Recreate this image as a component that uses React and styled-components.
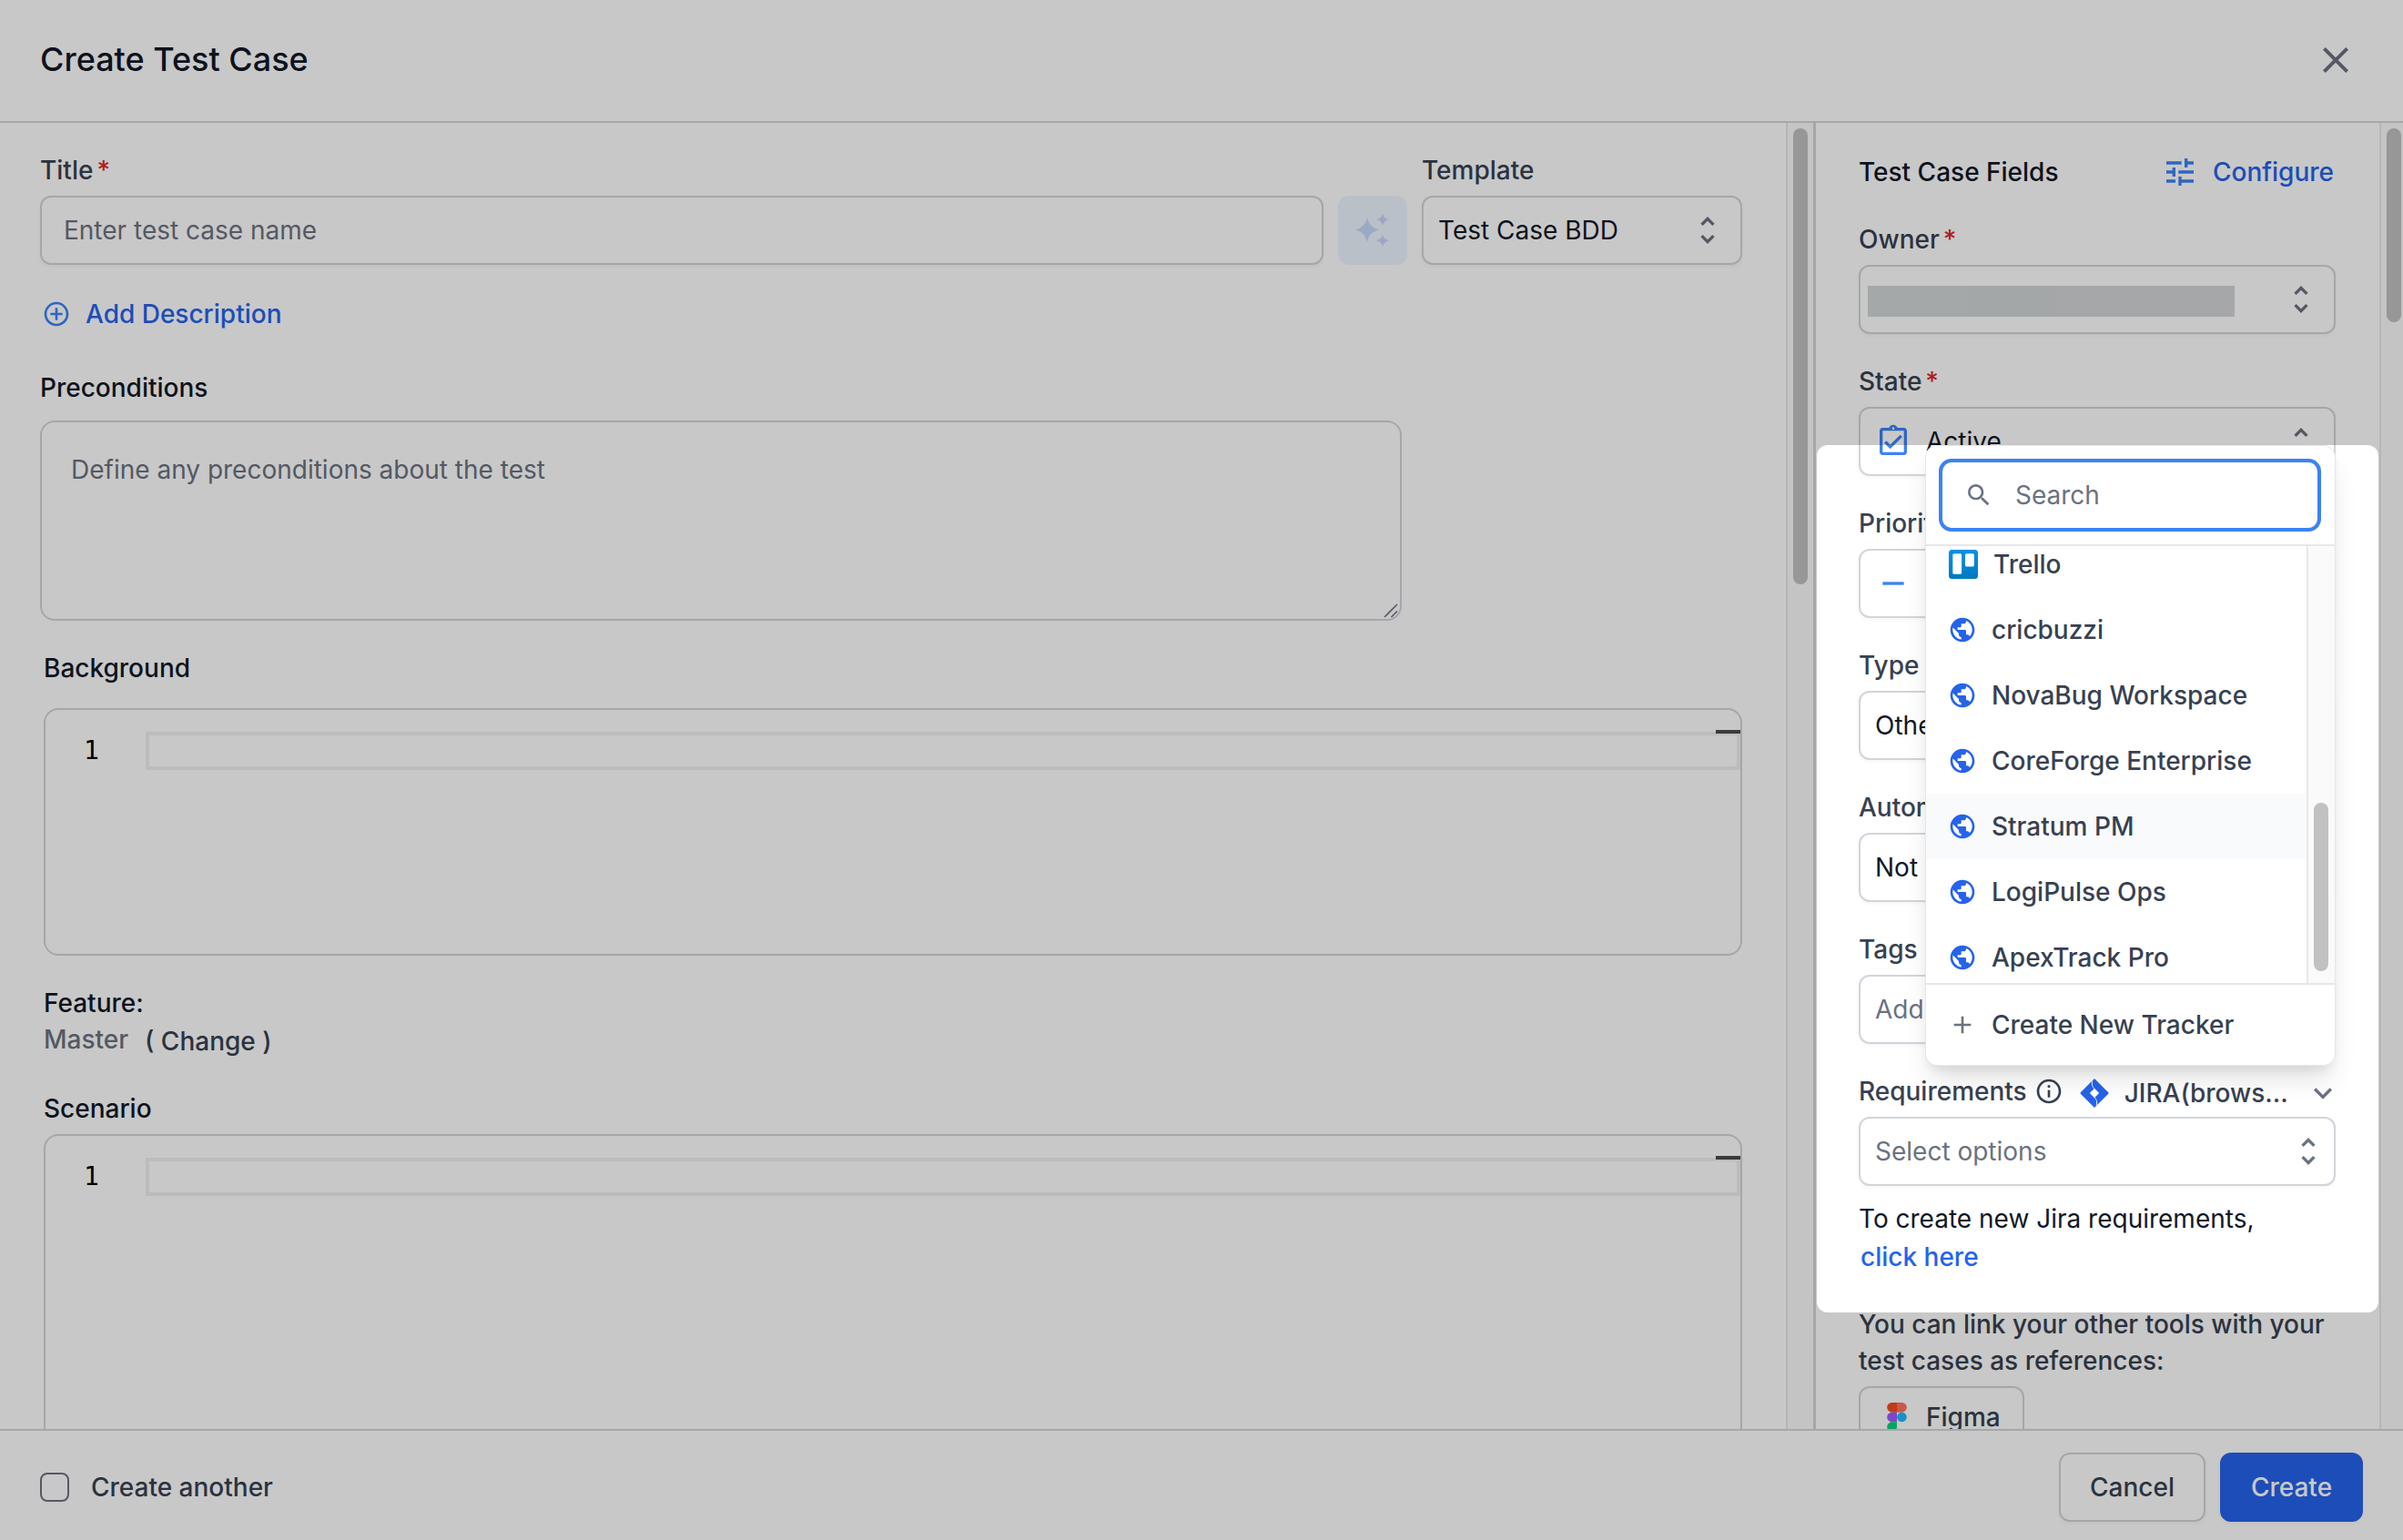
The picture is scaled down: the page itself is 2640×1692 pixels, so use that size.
import React from "react";
import styled, { createGlobalStyle } from "styled-components";
import {
  MdClose,
  MdTune,
  MdUnfoldMore,
  MdExpandMore,
  MdInfoOutline,
  MdPublic,
  MdAdd,
  MdSearch,
  MdRemove,
  MdOutlineAssignmentTurnedIn,
  MdAddCircleOutline,
} from "react-icons/md";

const c = {
  ink: "#111827",
  text: "#374151",
  muted: "#6b7280",
  line: "#d1d5db",
  soft: "#e5e7eb",
  blue: "#2563eb",
  sky: "#3b82f6",
  red: "#dc2626",
};

const Global = createGlobalStyle`
  * { box-sizing: border-box; }
  body { margin: 0; background: #fff; }
  svg { display: block; flex: none; }
`;

const Page = styled.div`
  position: relative;
  display: flex;
  flex-direction: column;
  width: 2640px;
  height: 1692px;
  overflow: hidden;
  background: #fff;
  color: ${c.text};
  font-family: Inter, "Liberation Sans", sans-serif;
  font-size: 28px;
  line-height: 40px;
  white-space: nowrap;
`;

const Header = styled.header`
  display: flex;
  align-items: center;
  justify-content: space-between;
  flex: none;
  height: 135px;
  padding: 0 50px 2px 44px;
  border-bottom: 2px solid ${c.line};
  color: ${c.muted};
`;

const Heading = styled.h1`
  margin: 0 0 1px;
  font-size: 36px;
  line-height: 48px;
  font-weight: 500;
  color: ${c.ink};
`;

const Body = styled.div`
  display: flex;
  flex: 1;
  min-height: 0;
`;

const Main = styled.main`
  display: flex;
  width: 1992px;
  overflow: hidden;
`;

const Form = styled.div`
  width: 1962px;
  padding: 32px 48px 0 44px;
`;

const Track = styled.div`
  flex: none;
  width: ${(p) => p.$width}px;
  padding: ${(p) => p.$offset}px 0 0 6px;
  background: #fafafa;
  border-left: 2px solid #e8e8e8;
`;

const Thumb = styled.div`
  width: 16px;
  height: ${(p) => p.$height}px;
  border-radius: 8px;
  background: #c1c1c1;
`;

const Label = styled.div`
  font-weight: 500;
  color: ${(p) => (p.$strong ? c.ink : c.text)};
`;

const Star = styled.span`
  margin-left: 4px;
  color: ${c.red};
`;

const Control = styled.div`
  display: flex;
  align-items: center;
  gap: 16px;
  height: 76px;
  margin-top: 8px;
  padding: 0 ${(p) => p.$right ?? 16}px 0 ${(p) => p.$left ?? 16}px;
  border: 2px solid ${c.line};
  border-radius: 12px;
  background: #fff;
  box-shadow: 0 2px 4px rgba(0, 0, 0, 0.04);
  color: ${(p) => (p.$placeholder ? c.muted : c.ink)};
`;

const Push = styled.span`
  margin-left: auto;
  color: ${c.muted};
`;

const TitleRow = styled.div`
  display: flex;
  align-items: flex-end;
  gap: 16px;
`;

const TitleField = styled.div`
  width: 1410px;
`;

const TemplateField = styled.div`
  width: 352px;
`;

const AiButton = styled.div`
  display: grid;
  place-items: center;
  width: 76px;
  height: 76px;
  border-radius: 12px;
  background: #edf5ff;
`;

const LinkButton = styled.div`
  display: flex;
  align-items: center;
  gap: ${(p) => p.$gap}px;
  font-weight: 500;
  color: ${c.blue};
  svg { color: ${c.sky}; }
`;

const AddDescription = styled(LinkButton)`
  margin: 34px 0 41px 2px;
`;

const TextArea = styled.div`
  position: relative;
  width: 1496px;
  height: 220px;
  margin-top: 16px;
  padding: 32px;
  border: 2px solid ${c.line};
  border-radius: 16px;
  color: ${c.muted};
`;

const Grip = styled.svg`
  position: absolute;
  right: 2px;
  bottom: 1px;
`;

const Steps = styled.div`
  margin-left: 4px;
  padding-top: 32px;
`;

const Editor = styled.div`
  position: relative;
  width: 1866px;
  height: ${(p) => p.$height}px;
  margin-top: ${(p) => p.$gap}px;
  padding-top: 24px;
  border: 2px solid ${c.line};
  border-radius: 16px;
`;

const CodeLine = styled.div`
  display: flex;
  height: 42px;
  line-height: 42px;
  font-family: "DejaVu Sans Mono", monospace;
  color: #000;
`;

const Gutter = styled.span`
  width: 110px;
  padding-left: 42px;
`;

const ActiveLine = styled.span`
  flex: 1;
  border: 4px solid #f0f0f0;
`;

const RulerMark = styled.span`
  position: absolute;
  top: 22px;
  right: 0;
  width: 27px;
  height: 4px;
  background: #4a4a4a;
`;

const Feature = styled.div`
  margin: 32px 0 34px;
`;

const FeatureValue = styled.div`
  display: flex;
  align-items: flex-start;
  height: 42px;
  font-weight: 500;
  color: ${c.muted};
`;

const Change = styled.span`
  margin: 2px 0 0 18px;
  color: ${c.text};
`;

const Sidebar = styled.aside`
  display: flex;
  flex: 1;
  min-width: 0;
  overflow: hidden;
  border-left: 3px solid ${c.line};
`;

const Fields = styled.div`
  width: 619px;
  flex: none;
  padding: 34px 48px 0 47px;
`;

const FieldsHead = styled.div`
  display: flex;
  justify-content: space-between;
  margin-bottom: 34px;
  padding-right: 2px;
  font-weight: 500;
  color: ${c.ink};
`;

const Field = styled.div`
  margin-bottom: ${(p) => p.$gap ?? 32}px;
`;

const Redacted = styled.span`
  width: 403px;
  height: 34px;
  margin: 4px 0 0 -8px;
  background: linear-gradient(90deg, #d3d6d8 0 27%, #d2d5d7 27% 51%, #d4d5d8 51%);
`;

const Blue = styled.span`
  color: ${c.sky};
`;

const ReqRow = styled.div`
  display: flex;
  align-items: center;
  height: 40px;
`;

const Tracker = styled.div`
  display: flex;
  align-items: center;
  flex: 1;
  margin: 4px -6px 0 18px;
  font-weight: 500;
`;

const TrackerName = styled.span`
  margin-left: 17px;
`;

const Caret = styled.span`
  margin-left: auto;
  color: ${c.muted};
`;

const Info = styled.span`
  margin-left: 8px;
`;

const Hint = styled.div`
  color: ${c.ink};
`;

const HintLink = styled.div`
  margin: 2px 0 34px 2px;
  font-weight: 500;
  color: ${c.blue};
`;

const ToolNote = styled.div`
  width: 540px;
  font-weight: 500;
  white-space: pre-line;
`;

const ToolButton = styled.div`
  display: flex;
  align-items: center;
  gap: 21px;
  width: 182px;
  height: 68px;
  margin-top: 8px;
  padding-left: 29px;
  border: 2px solid ${c.line};
  border-radius: 12px;
  font-weight: 500;
`;

const Footer = styled.footer`
  position: relative;
  display: flex;
  align-items: center;
  flex: none;
  height: 122px;
  padding: 4px 44px 0;
  border-top: 2px solid ${c.line};
  background: #fff;
  font-weight: 500;
`;

const Checkbox = styled.span`
  width: 32px;
  height: 32px;
  margin-right: 24px;
  border: 2px solid ${c.muted};
  border-radius: 8px;
`;

const Actions = styled.div`
  display: flex;
  gap: 16px;
  margin-left: auto;
`;

const Button = styled.div`
  display: grid;
  place-items: center;
  width: ${(p) => (p.$primary ? 157 : 161)}px;
  height: 76px;
  border: 2px solid ${(p) => (p.$primary ? c.blue : c.line)};
  border-radius: 12px;
  background: ${(p) => (p.$primary ? c.blue : "#fff")};
  color: ${(p) => (p.$primary ? "#fff" : c.text)};
  box-shadow: 0 2px 4px rgba(0, 0, 0, 0.04);
`;

const Menu = styled.div`
  position: absolute;
  left: 2115px;
  top: 489px;
  width: 451px;
  height: 682px;
  border: 1px solid #e6e7e9;
  border-radius: 13px;
  background: #fff;
  overflow: hidden;
  font-weight: 500;
  box-shadow: 0 20px 30px -6px rgba(0, 0, 0, 0.12), 0 8px 12px -4px rgba(0, 0, 0, 0.08);
`;

const SearchWrap = styled.div`
  padding: 14px 15px 14px 14px;
  border-bottom: 2px solid ${c.soft};
`;

const SearchBox = styled.div`
  display: flex;
  align-items: center;
  gap: 24px;
  height: 80px;
  padding-left: 24px;
  border: 4px solid ${c.sky};
  border-radius: 14px;
  font-weight: 400;
  color: ${c.muted};
`;

const MenuBody = styled.div`
  display: flex;
  height: 480px;
  overflow: hidden;
`;

const List = styled.div`
  width: 418px;
  margin-top: -16px;
`;

const Item = styled.div`
  display: flex;
  align-items: center;
  gap: ${(p) => (p.$inset ? 17 : 16)}px;
  height: 72px;
  padding-left: ${(p) => (p.$inset ? 25 : 24)}px;
  background: ${(p) => (p.$hover ? "#f9fafb" : "transparent")};
  svg { color: ${c.blue}; }
`;

const CreateItem = styled(Item)`
  height: 90px;
  border-top: 2px solid ${c.soft};
  svg { color: ${c.muted}; }
`;

const Spotlight = styled.div`
  position: absolute;
  left: 1996px;
  top: 489px;
  width: 617px;
  height: 953px;
  border-radius: 12px;
  box-shadow: 0 0 0 3000px rgba(0, 0, 0, 0.216);
`;

const Sparkles = () => (
  <svg width="40" height="40" viewBox="0 0 40 40">
    <path fill="#c6d9fa" d="M14 6q2 11 13 13.500q-11 2.500-13 13.500q-2.500-11-13-13.500q10.500-2.500 13-13.500z" />
    <path fill="#cad4fb" d="M31 1.500q1.200 5.500 7 6.700q-5.800 1.200-7 6.700q-1.200-5.500-7-6.700q5.800-1.200 7-6.700zM31 24.500q1.200 5.500 7 6.700q-5.800 1.200-7 6.700q-1.200-5.500-7-6.700q5.800-1.200 7-6.700z" />
  </svg>
);

const TrelloIcon = () => (
  <svg width="32" height="32" viewBox="0 0 32 32">
    <defs>
      <linearGradient id="trello" x1="0" y1="0" x2="0" y2="1">
        <stop offset="0" stopColor="#0091e6" />
        <stop offset="1" stopColor="#0079bf" />
      </linearGradient>
    </defs>
    <rect width="32" height="32" rx="3.500" fill="url(#trello)" />
    <rect x="4.300" y="4.200" width="9.800" height="22.500" rx="1.500" fill="#fff" />
    <rect x="18" y="4.200" width="9.800" height="14.300" rx="1.500" fill="#fff" />
  </svg>
);

const JiraIcon = () => (
  <svg width="32" height="32" viewBox="0 0 32 32">
    <path fill="#2563eb" d="M16 0l15 15q1 1 0 2l-15 15l-15-15q-1-1 0-2z" />
    <path fill="#fff" d="M16 10.800l5.200 5.200l-5.200 5.200l-5.200-5.200z" />
    <path fill="none" stroke="#fff" strokeWidth="0.900" d="M13.800 2.500c-1.200 3.500-.300 6.500 2.200 8.800M18.200 29.500c1.200-3.500.300-6.500-2.200-8.800" />
  </svg>
);

const FigmaIcon = () => (
  <svg width="22" height="32" viewBox="0 0 22 32">
    <path fill="#f24e1e" d="M11 0h-5.500a5.330 5.330 0 0 0 0 10.660h5.500z" />
    <path fill="#ff7262" d="M11 0h5.500a5.330 5.330 0 0 1 0 10.660h-5.500z" />
    <path fill="#a259ff" d="M11 10.660h-5.500a5.330 5.330 0 0 0 0 10.660h5.500z" />
    <circle fill="#1abcfe" cx="16.400" cy="16" r="5.330" />
    <path fill="#0acf83" d="M5.500 21.330h5.500v5.330a5.400 5.330 0 1 1-5.500-5.330z" />
  </svg>
);

const SelectBox = ({ children, ...rest }) => (
  <Control {...rest}>
    {children}
    <Push><MdUnfoldMore size={40} /></Push>
  </Control>
);

const FormField = ({ label, required, children, ...rest }) => (
  <Field>
    <Label>{label}{required && <Star>*</Star>}</Label>
    <SelectBox {...rest}>{children}</SelectBox>
  </Field>
);

const CodeEditor = ({ height, gap }) => (
  <Editor $height={height} $gap={gap}>
    <CodeLine><Gutter>1</Gutter><ActiveLine /></CodeLine>
    <RulerMark />
  </Editor>
);

const trackers = ["cricbuzzi", "NovaBug Workspace", "CoreForge Enterprise", "Stratum PM", "LogiPulse Ops", "ApexTrack Pro"];

export default function App() {
  return (
    <Page>
      <Global />
      <Header>
        <Heading>Create Test Case</Heading>
        <MdClose size={48} />
      </Header>
      <Body>
        <Main>
          <Form>
            <TitleRow>
              <TitleField>
                <Label>Title<Star>*</Star></Label>
                <Control $placeholder $left={24}>Enter test case name</Control>
              </TitleField>
              <AiButton><Sparkles /></AiButton>
              <TemplateField>
                <Label>Template</Label>
                <SelectBox>Test Case BDD</SelectBox>
              </TemplateField>
            </TitleRow>
            <AddDescription $gap={16}>
              <MdAddCircleOutline size={32} />
              Add Description
            </AddDescription>
            <Label $strong>Preconditions</Label>
            <TextArea>
              Define any preconditions about the test
              <Grip width="16" height="16" viewBox="0 0 16 16" fill="none" stroke={c.muted} strokeWidth="1.600">
                <path d="M1 15L15 1M8.500 15L15 8.500" />
              </Grip>
            </TextArea>
            <Steps>
              <Label $strong>Background</Label>
              <CodeEditor height={272} gap={24} />
              <Feature>
                <Label $strong>Feature:</Label>
                <FeatureValue>Master<Change>( Change )</Change></FeatureValue>
              </Feature>
              <Label $strong>Scenario</Label>
              <CodeEditor height={400} gap={8} />
            </Steps>
          </Form>
          <Track $width={30} $offset={6}><Thumb $height={501} /></Track>
        </Main>
        <Sidebar>
          <Fields>
            <FieldsHead>
              Test Case Fields
              <LinkButton $gap={16}><MdTune size={40} />Configure</LinkButton>
            </FieldsHead>
            <FormField label="Owner" required><Redacted /></FormField>
            <FormField label="State" required>
              <Blue><MdOutlineAssignmentTurnedIn size={40} /></Blue>Active
            </FormField>
            <FormField label="Priority" required><Blue><MdRemove size={40} /></Blue>Medium</FormField>
            <FormField label="Type">Other</FormField>
            <FormField label="Automation Status">Not Automated</FormField>
            <FormField label="Tags" $placeholder>Add tags</FormField>
            <Field $gap={16}>
              <ReqRow>
                <Label>Requirements</Label>
                <Info><MdInfoOutline size={32} /></Info>
                <Tracker>
                  <JiraIcon />
                  <TrackerName>JIRA(brows...</TrackerName>
                  <Caret><MdExpandMore size={40} /></Caret>
                </Tracker>
              </ReqRow>
              <SelectBox $placeholder $right={8}>Select options</SelectBox>
            </Field>
            <Hint>To create new Jira requirements,</Hint>
            <HintLink>click here</HintLink>
            <ToolNote>{"You can link your other tools with your\ntest cases as references:"}</ToolNote>
            <ToolButton><FigmaIcon />Figma</ToolButton>
          </Fields>
          <Track $width={30} $offset={6}><Thumb $height={213} /></Track>
        </Sidebar>
      </Body>
      <Footer>
        <Checkbox />
        Create another
        <Actions>
          <Button>Cancel</Button>
          <Button $primary>Create</Button>
        </Actions>
      </Footer>
      <Menu>
        <SearchWrap>
          <SearchBox><MdSearch size={32} />Search</SearchBox>
        </SearchWrap>
        <MenuBody>
          <List>
            <Item $inset><TrelloIcon />Trello</Item>
            {trackers.map((name) => (
              <Item key={name} $hover={name === "Stratum PM"}>
                <MdPublic size={32} />{name}
              </Item>
            ))}
          </List>
          <Track $width={31} $offset={282}><Thumb $height={185} /></Track>
        </MenuBody>
        <CreateItem><MdAdd size={32} />Create New Tracker</CreateItem>
      </Menu>
      <Spotlight />
    </Page>
  );
}
